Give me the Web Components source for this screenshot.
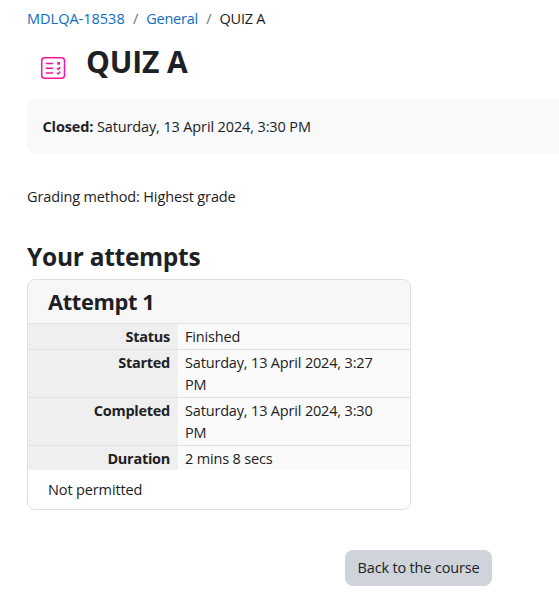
<!DOCTYPE html>
<html lang="en">
<head>
<meta charset="utf-8">
<title>QUIZ A</title>
<style>
  body {
    margin: 0;
    height: 598px;
    overflow: hidden;
    background: #fff;
    color: #1d2125;
    font: 14.5px/22px "Segoe UI", "Open Sans", "Noto Sans", sans-serif;
    letter-spacing: -0.13px;
  }
</style>
</head>
<body>
<quiz-page>
  <bread-crumbs slot="nav">
    <a href="#">MDLQA-18538</a>
    <a href="#">General</a>
    <span>QUIZ A</span>
  </bread-crumbs>
  <activity-header slot="header">QUIZ A</activity-header>
  <activity-dates label="Closed:">Saturday, 13 April 2024, 3:30 PM</activity-dates>
  <quiz-info>Grading method: Highest grade</quiz-info>
  <section-heading>Your attempts</section-heading>
  <attempt-card>
    <span slot="title">Attempt 1</span>
    <attempt-row label="Status">Finished</attempt-row>
    <attempt-row label="Started">Saturday, 13 April 2024, 3:27 PM</attempt-row>
    <attempt-row label="Completed">Saturday, 13 April 2024, 3:30 PM</attempt-row>
    <attempt-row label="Duration">2 mins 8 secs</attempt-row>
    <span slot="footer">Not permitted</span>
  </attempt-card>
  <action-button slot="actions">Back to the course</action-button>
</quiz-page>

<script>
/**
 * Attaches an open shadow root holding the given markup.
 */
function attach(el, html) {
  el.attachShadow({ mode: "open" }).innerHTML = html;
}

/** Page shell: navigation, header, content and actions in one column. */
class QuizPage extends HTMLElement {
  constructor() {
    super();
    attach(this, `
      <style>
        :host { display: block; padding: 8px 0 0 27px; }
        .actions { display: flex; justify-content: center; margin-top: 40px; padding-right: 28px; padding-left: 279px; }
      </style>
      <slot name="nav"></slot>
      <slot name="header"></slot>
      <main><slot></slot></main>
      <div class="actions"><slot name="actions"></slot></div>
    `);
  }
}

/** Breadcrumb trail, separated by slashes. */
class BreadCrumbs extends HTMLElement {
  constructor() {
    super();
    attach(this, `
      <style>
        :host { display: flex; height: 22px; white-space: nowrap; }
        ::slotted(*) { letter-spacing: -0.22px; }
        ::slotted(:first-child) { letter-spacing: 0; }
        ::slotted(a) { color: #0f6cbf; text-decoration: none; }
        ::slotted(:not(:first-child))::before {
          content: "/";
          color: #6a737b;
          padding: 0 8.2px;
        }
      </style>
      <slot></slot>
    `);
  }
}

/** Activity icon next to the activity name. */
class ActivityHeader extends HTMLElement {
  constructor() {
    super();
    attach(this, `
      <style>
        :host { display: flex; height: 69px; }
        .icon { width: 26px; height: 24px; margin: 26px 20px 0 13px; }
        h1 { margin: 14px 0 0; font-size: 30px; line-height: 36px; font-weight: 700; }
      </style>
      <svg class="icon" viewBox="0 0 26 24" fill="none" stroke="#f7159a" stroke-linecap="round" stroke-linejoin="round">
        <rect x="1.7" y="1.7" width="22.8" height="20.6" rx="3" stroke-width="1.5"/>
        <path d="M6.3 7.5h6.2M6.3 12.3h6.2M6.3 16.9h6.2" stroke-width="1.5"/>
        <rect x="18" y="6.7" width="1.3" height="1.3" stroke-width="1.5"/>
        <path d="M17.4 12.6l1 .8 1.5-1.9M17.4 17.1l1 .8 1.5-1.9" stroke-width="1.5"/>
      </svg>
      <h1><slot></slot></h1>
    `);
  }
}

/** Shaded band with the closing date. */
class ActivityDates extends HTMLElement {
  constructor() {
    super();
    attach(this, `
      <style>
        :host {
          display: block;
          box-sizing: border-box;
          height: 54px;
          padding: 17px 15px 17px 15.5px;
          border-radius: 8px 0 0 8px;
          background: #f8f9fa;
        }
      </style>
      <strong></strong> <slot></slot>
    `);
    this.shadowRoot.querySelector("strong").textContent = this.getAttribute("label");
  }
}

class QuizInfo extends HTMLElement {
  constructor() {
    super();
    attach(this, `
      <style>:host { display: block; margin-top: 33px; }</style>
      <slot></slot>
    `);
  }
}

class SectionHeading extends HTMLElement {
  constructor() {
    super();
    attach(this, `
      <style>
        :host { display: block; margin-top: 34px; }
        h3 { margin: 0; font-size: 24.5px; line-height: 30px; font-weight: 700; letter-spacing: -0.28px; }
      </style>
      <h3><slot></slot></h3>
    `);
  }
}

/** Card summarising one attempt: title, rows, footer. */
class AttemptCard extends HTMLElement {
  constructor() {
    super();
    attach(this, `
      <style>
        :host {
          display: block;
          box-sizing: border-box;
          width: 384px;
          height: 231px;
          margin-top: 7px;
          border: 1px solid #dfdfdf;
          border-radius: 8px;
          overflow: hidden;
          background: #fff;
        }
        h4 {
          margin: 0;
          padding: 8px 20px;
          height: 27px;
          background: #f7f7f7;
          font-size: 21.8px;
          line-height: 27px;
          font-weight: 700;
          letter-spacing: -0.35px;
        }
        .footer { padding: 9px 20px; }
      </style>
      <h4><slot name="title"></slot></h4>
      <slot></slot>
      <div class="footer"><slot name="footer"></slot></div>
    `);
  }
}

/** Label and value pair inside an attempt card. */
class AttemptRow extends HTMLElement {
  constructor() {
    super();
    attach(this, `
      <style>
        :host {
          --pad-bottom: 1px;
          display: flex;
          border-top: 1px solid #dee2e6;
          background: #fafafa;
        }
        :host(:last-of-type) { --pad-bottom: 0; }
        .label {
          flex: 0 0 142px;
          padding: 2px 8px var(--pad-bottom) 0;
          background: #efefef;
          text-align: right;
          font-weight: 700;
          letter-spacing: -0.28px;
        }
        .value { flex: 1; padding: 2px 20px var(--pad-bottom) 7px; letter-spacing: -0.17px; }
      </style>
      <div class="label"></div>
      <div class="value"><slot></slot></div>
    `);
    this.shadowRoot.querySelector(".label").textContent = this.getAttribute("label");
  }
}

class ActionButton extends HTMLElement {
  constructor() {
    super();
    attach(this, `
      <style>
        button {
          width: 147px;
          height: 36px;
          padding: 0;
          border: 0;
          border-radius: 8px;
          background: #ced4da;
          color: inherit;
          font: inherit;
          letter-spacing: -0.17px;
          white-space: nowrap;
        }
      </style>
      <button type="button"><slot></slot></button>
    `);
  }
}

customElements.define("quiz-page", QuizPage);
customElements.define("bread-crumbs", BreadCrumbs);
customElements.define("activity-header", ActivityHeader);
customElements.define("activity-dates", ActivityDates);
customElements.define("quiz-info", QuizInfo);
customElements.define("section-heading", SectionHeading);
customElements.define("attempt-card", AttemptCard);
customElements.define("attempt-row", AttemptRow);
customElements.define("action-button", ActionButton);
</script>
</body>
</html>
